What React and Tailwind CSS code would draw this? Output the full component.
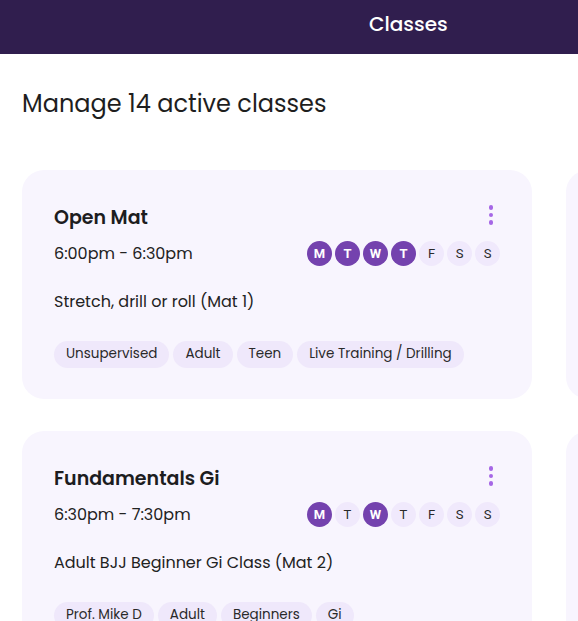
import React from "react";

const font = { fontFamily: "Poppins, 'Noto Sans', Inter, sans-serif" };

const DAYS = ["M", "T", "W", "T", "F", "S", "S"];

function Day({ label, active }) {
  return (
    <div
      className={
        "flex h-[25px] w-[25px] items-center justify-center rounded-full text-[13px] " +
        (active ? "bg-[#7442ae] font-bold text-white" : "bg-[#f0e9fc] text-[#2a2a2a]")
      }
      style={{ fontFamily: "Roboto, sans-serif" }}
    >
      {label}
    </div>
  );
}

function Kebab() {
  return (
    <div className="flex flex-col items-center gap-[3px]">
      <span className="h-[4.5px] w-[4.5px] rounded-full bg-[#a667e6]" />
      <span className="h-[4.5px] w-[4.5px] rounded-full bg-[#a667e6]" />
      <span className="h-[4.5px] w-[4.5px] rounded-full bg-[#a667e6]" />
    </div>
  );
}

function Card({ title, time, desc, days, tags }) {
  return (
    <div className="w-[510px] shrink-0 rounded-[22px] bg-[#f8f5fe] px-8 pb-[31px] pt-[35px]">
      <div className="flex items-start justify-between">
        <div className="text-[19px] font-semibold leading-[26px] text-[#1d1d1f]">{title}</div>
        <div className="mr-[7px] mt-0">
          <Kebab />
        </div>
      </div>
      <div className="mt-[10px] flex items-center justify-between">
        <div className="text-[16px] text-[#222]">{time}</div>
        <div className="flex gap-[3px]">
          {DAYS.map((d, i) => (
            <Day key={i} label={d} active={days.includes(i)} />
          ))}
        </div>
      </div>
      <div className="mt-[24px] text-[16px] leading-6 text-[#222]">{desc}</div>
      <div className="mt-[27px] flex gap-[4px]">
        {tags.map((t) => (
          <div key={t} className="flex h-[27px] items-center rounded-full bg-[#efe8fb] px-3 text-[13.5px] text-[#2a2a2a]">
            {t}
          </div>
        ))}
      </div>
    </div>
  );
}

export default function App() {
  return (
    <div className="h-[621px] w-[578px] overflow-hidden bg-white" style={font}>
      <div className="flex h-[54px] items-center bg-[#301e4e] pl-[369px] pb-[6px]">
        <span className="text-[20px] font-medium text-white">Classes</span>
      </div>
      <div className="px-[22px]">
        <h1 className="mt-[34px] text-[24px] font-normal leading-8 text-[#1e1e1e]">Manage 14 active classes</h1>
        <div className="mt-[50px] flex flex-col gap-[32px]">
          <div className="flex gap-[34px]">
            <Card
              title="Open Mat"
              time="6:00pm - 6:30pm"
              desc="Stretch, drill or roll (Mat 1)"
              days={[0, 1, 2, 3]}
              tags={["Unsupervised", "Adult", "Teen", "Live Training / Drilling"]}
            />
            <div className="w-[510px] shrink-0 rounded-[22px] bg-[#f8f5fe]" />
          </div>
          <div className="flex gap-[34px]">
            <Card
              title="Fundamentals Gi"
              time="6:30pm - 7:30pm"
              desc="Adult BJJ Beginner Gi Class (Mat 2)"
              days={[0, 2]}
              tags={["Prof. Mike D", "Adult", "Beginners", "Gi"]}
            />
            <div className="w-[510px] shrink-0 rounded-[22px] bg-[#f8f5fe]" />
          </div>
        </div>
      </div>
    </div>
  );
}
